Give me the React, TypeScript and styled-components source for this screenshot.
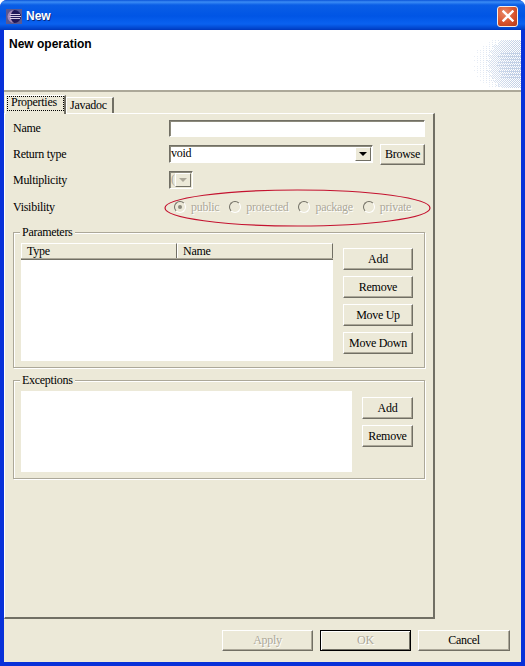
import styled, { createGlobalStyle } from "styled-components";

const GlobalStyle = createGlobalStyle`
  html, body {
    margin: 0;
    padding: 0;
    background: #fff;
  }
  * {
    box-sizing: border-box;
  }
`;

const App = () => {
  return (
    <Window>
      <GlobalStyle />
      <TitleBar>
        <AppIcon />
        <TitleText>New</TitleText>
        <CloseButton>
          <svg width="12" height="12" viewBox="0 0 12 12">
            <path d="M1.5 1.5 L10.5 10.5 M10.5 1.5 L1.5 10.5" stroke="#fff" strokeWidth="2.4" strokeLinecap="square" />
          </svg>
        </CloseButton>
      </TitleBar>
      <Body>
        <Banner>
          <BannerTitle>New operation</BannerTitle>
          <BannerArt />
        </Banner>
        <TabFolder>
          <TabRow>
            <Tab $active>
              <TabFocus>Properties</TabFocus>
            </Tab>
            <Tab>Javadoc</Tab>
          </TabRow>
          <Panel>
            <FormRow $height={17}>
              <Label>Name</Label>
              <TextField $width={256} />
            </FormRow>
            <FormRow $height={22} $top={6}>
              <Label>Return type</Label>
              <TextField $width={204}>
                <FieldText>void</FieldText>
                <ArrowButton />
              </TextField>
              <PushButton $width={45} $height={21} $left={7}>
                Browse
              </PushButton>
            </FormRow>
            <FormRow $height={18} $top={6}>
              <Label>Multiplicity</Label>
              <TextField $width={24} $disabled>
                <FieldText $disabled>(</FieldText>
                <ArrowButton $disabled />
              </TextField>
            </FormRow>
            <FormRow $height={20} $top={8}>
              <Label>Visibility</Label>
              <RadioGroup>
                <Radio $checked />
                <RadioLabel>public</RadioLabel>
                <Radio />
                <RadioLabel>protected</RadioLabel>
                <Radio />
                <RadioLabel>package</RadioLabel>
                <Radio />
                <RadioLabel>private</RadioLabel>
              </RadioGroup>
              <Annotation width="268" height="38" viewBox="0 0 268 38">
                <ellipse cx="133.5" cy="19" rx="132.5" ry="18" fill="none" stroke="#c4122f" strokeWidth="1.2" />
              </Annotation>
            </FormRow>

            <Group $top={15}>
              <GroupLegend>Parameters</GroupLegend>
              <ListArea $width={312} $height={118}>
                <TableHead>
                  <HeadCell $width={156}>Type</HeadCell>
                  <HeadCell $width={156}>Name</HeadCell>
                </TableHead>
              </ListArea>
              <ButtonColumn $width={70} $offset={5}>
                <PushButton>Add</PushButton>
                <PushButton>Remove</PushButton>
                <PushButton>Move Up</PushButton>
                <PushButton>Move Down</PushButton>
              </ButtonColumn>
            </Group>

            <Group $top={12}>
              <GroupLegend>Exceptions</GroupLegend>
              <ListArea $width={331} $height={81} />
              <ButtonColumn $width={51} $offset={6}>
                <PushButton>Add</PushButton>
                <PushButton>Remove</PushButton>
              </ButtonColumn>
            </Group>
          </Panel>
        </TabFolder>
        <Footer>
          <PushButton $width={91} $height={21} $disabled>
            Apply
          </PushButton>
          <PushButton $width={91} $height={21} $disabled $default>
            OK
          </PushButton>
          <PushButton $width={92} $height={21}>
            Cancel
          </PushButton>
        </Footer>
      </Body>
    </Window>
  );
};
export default App;

const AppIcon = () => (
  <svg width="16" height="15" viewBox="0 0 16 15" style={{ flex: "none" }}>
    <rect width="16" height="15" fill="#5a5890" />
    <circle cx="8.5" cy="7.5" r="6.5" fill="#1f1758" />
    <path d="M8 1 A6.5 6.5 0 0 0 8 14 A8 8 0 0 1 8 1 Z" fill="#a58ab8" />
    <path d="M4 5.5 H14 M3.5 7.5 H15 M4 9.5 H14" stroke="#d8cce4" strokeWidth="1" />
  </svg>
);

const BannerArt = () => {
  const dots = [];
  for (let y = 0; y < 48; y++) {
    const edge = Math.sqrt(1 - ((y - 23.5) / 24) ** 2);
    const start = 24 - edge * 24 + (y % 5) * 1.5;
    for (let x = 0; x < 50; x++) {
      if (x < start) continue;
      const depth = (x - start) / (50 - start);
      const stripe = y % 3 === 1 && depth > 0.5 && y > 12 && y < 40;
      const visible =
        depth < 0.3 ? x % 3 === 0 && y % 2 === 0 : stripe || (x + y) % 2 === 0;
      if (visible) {
        dots.push(
          <rect
            key={`${x}-${y}`}
            x={x}
            y={y}
            width="1"
            height="1"
            fill="#c2d0e6"
            opacity={Math.min(1, 0.35 + depth * 0.8)}
          />
        );
      }
    }
  }
  return (
    <BannerSvg width="50" height="48" viewBox="0 0 50 48">
      {dots}
    </BannerSvg>
  );
};

const Window = styled.div`
  width: 525px;
  height: 666px;
  display: flex;
  flex-direction: column;
  background: #0831d9;
  border-radius: 7px 7px 0 0;
  overflow: hidden;
  font-family: "Liberation Serif", serif;
  font-size: 12px;
  letter-spacing: -0.28px;
  color: #000;
`;

const TitleBar = styled.div`
  height: 30px;
  flex: none;
  display: flex;
  align-items: center;
  padding: 2px 7px 0 6px;
  background: linear-gradient(
    180deg,
    #0a54d8 0,
    #3b8cf5 2px,
    #0a5ee6 5px,
    #0055e5 16px,
    #0a62f0 24px,
    #0041c8 29px,
    #0035b8 30px
  );
`;

const TitleText = styled.span`
  margin-left: 4px;
  font-family: "Liberation Sans", sans-serif;
  font-size: 12px;
  font-weight: 700;
  letter-spacing: 0;
  color: #fff;
  text-shadow: 1px 1px 0 #0a2a80;
`;

const CloseButton = styled.div`
  margin-left: auto;
  width: 21px;
  height: 21px;
  display: flex;
  align-items: center;
  justify-content: center;
  border: 1px solid #f4ece8;
  border-radius: 3px;
  background: radial-gradient(circle at 35% 30%, #e98a68 0, #d9532c 55%, #b23a1a 100%);
`;

const Body = styled.div`
  flex: 1;
  margin: 0 4px 4px;
  display: flex;
  flex-direction: column;
  background: #ece9d8;
`;

const Banner = styled.div`
  height: 62px;
  flex: none;
  display: flex;
  justify-content: space-between;
  padding: 7px 0 0 5px;
  background: #fff;
  border-bottom: 2px solid #aca899;
`;

const BannerTitle = styled.div`
  font-family: "Liberation Sans", sans-serif;
  font-size: 12px;
  font-weight: 700;
  letter-spacing: 0;
  line-height: 14px;
`;

const BannerSvg = styled.svg`
  flex: none;
  margin-top: 3px;
`;

const TabFolder = styled.div`
  flex: 1;
  width: 431px;
  display: flex;
  flex-direction: column;
`;

const TabRow = styled.div`
  height: 21px;
  flex: none;
  display: flex;
  align-items: flex-end;
  padding-left: 1px;
`;

const Tab = styled.div<{ $active?: boolean }>`
  position: relative;
  z-index: 1;
  height: ${(p) => (p.$active ? 19 : 16)}px;
  margin-bottom: ${(p) => (p.$active ? -1 : 0)}px;
  padding: ${(p) => (p.$active ? "0 0 0 1px" : "0 5px 0 3px")};
  line-height: 14px;
  background: #ece9d8;
  border-top: 1px solid #fff;
  border-left: 1px solid #fff;
  border-right: 2px solid #716f64;
`;

const TabFocus = styled.div`
  width: 57px;
  height: 15px;
  padding: 0 3px;
  line-height: 11px;
  border: 1px dotted #000;
`;

const Panel = styled.div`
  flex: 1;
  padding: 6px 8px 0;
  border-top: 1px solid #fff;
  border-left: 1px solid #fff;
  border-right: 2px solid #716f64;
  border-bottom: 2px solid #716f64;
`;

const FormRow = styled.div<{ $height: number; $top?: number }>`
  position: relative;
  height: ${(p) => p.$height}px;
  margin-top: ${(p) => p.$top || 0}px;
  display: flex;
  align-items: center;
`;

const Label = styled.div`
  width: 156px;
  flex: none;
`;

const TextField = styled.div<{ $width: number; $disabled?: boolean }>`
  width: ${(p) => p.$width}px;
  height: ${(p) => (p.$width === 256 ? 17 : 18)}px;
  display: flex;
  align-items: center;
  justify-content: space-between;
  padding-left: 1px;
  line-height: 14px;
  background: ${(p) => (p.$disabled ? "#ece9d8" : "#fff")};
  border: 1px solid;
  border-color: #716f64 #fff #fff #716f64;
  box-shadow: inset 1px 1px 0 #8c8a7c;
`;

const FieldText = styled.span<{ $disabled?: boolean }>`
  margin-top: -2px;
  color: ${(p) => (p.$disabled ? "#aca899" : "#000")};
`;

const ArrowButton = styled.div<{ $disabled?: boolean }>`
  width: 16px;
  height: 14px;
  margin-right: 1px;
  flex: none;
  display: flex;
  align-items: center;
  justify-content: center;
  background: #ece9d8;
  border: 1px solid;
  border-color: #fff #716f64 #716f64 #fff;

  &::after {
    content: "";
    border-left: 4px solid transparent;
    border-right: 4px solid transparent;
    border-top: 4px solid ${(p) => (p.$disabled ? "#aca899" : "#000")};
  }
`;

const PushButton = styled.div<{
  $width?: number;
  $height?: number;
  $left?: number;
  $disabled?: boolean;
  $default?: boolean;
}>`
  width: ${(p) => (p.$width ? `${p.$width}px` : "100%")};
  height: ${(p) => p.$height || 22}px;
  margin-left: ${(p) => p.$left || 0}px;
  flex: none;
  display: flex;
  align-items: center;
  justify-content: center;
  background: #ece9d8;
  color: ${(p) => (p.$disabled ? "#aca899" : "#000")};
  text-shadow: ${(p) => (p.$disabled ? "1px 1px 0 #fff" : "none")};
  border: 1px solid;
  border-color: ${(p) => (p.$default ? "#000" : "#fff #716f64 #716f64 #fff")};
  box-shadow: ${(p) =>
    p.$default
      ? "inset 1px 1px 0 #fff, inset -1px -1px 0 #716f64"
      : "inset -1px -1px 0 #aca899"};
`;

const RadioGroup = styled.div`
  display: flex;
  align-items: center;
  padding-left: 5px;
  gap: 5px;
  color: #aca899;
`;

const Radio = styled.div<{ $checked?: boolean }>`
  position: relative;
  width: 12px;
  height: 12px;
  flex: none;
  border-radius: 50%;
  background: #ece9d8;
  border: 1px solid;
  border-color: #716f64 #fff #fff #716f64;

  &::after {
    content: "";
    display: ${(p) => (p.$checked ? "block" : "none")};
    position: absolute;
    left: 3px;
    top: 3px;
    width: 4px;
    height: 4px;
    border-radius: 50%;
    background: #8c8a7c;
  }
`;

const RadioLabel = styled.span`
  margin-right: 5px;
  text-shadow: 1px 1px 0 #fff;
`;

const Annotation = styled.svg`
  position: absolute;
  left: 151px;
  top: -8px;
`;

const Group = styled.div<{ $top: number }>`
  position: relative;
  width: 412px;
  margin-top: ${(p) => p.$top}px;
  display: flex;
  align-items: flex-start;
  justify-content: space-between;
  padding: 10px 11px 6px 7px;
  border: 1px solid #aca899;
  box-shadow: 1px 1px 0 #fff, inset 1px 1px 0 #fff;
`;

const GroupLegend = styled.div`
  position: absolute;
  left: 6px;
  top: -7px;
  padding: 0 2px;
  line-height: 12px;
  background: #ece9d8;
`;

const ListArea = styled.div<{ $width: number; $height: number }>`
  width: ${(p) => p.$width}px;
  height: ${(p) => p.$height}px;
  flex: none;
  background: #fff;
`;

const TableHead = styled.div`
  height: 16px;
  display: flex;
  background: #ece9d8;
  border-bottom: 1px solid #aca899;
  box-shadow: 0 1px 0 #716f64;
`;

const HeadCell = styled.div<{ $width: number }>`
  width: ${(p) => p.$width}px;
  padding-left: 5px;
  line-height: 14px;
  border-top: 1px solid #fff;
  border-right: 1px solid #716f64;
  border-left: 1px solid #fff;
`;

const ButtonColumn = styled.div<{ $width: number; $offset: number }>`
  width: ${(p) => p.$width}px;
  flex: none;
  display: flex;
  flex-direction: column;
  gap: 6px;
  padding-top: ${(p) => p.$offset}px;
`;

const Footer = styled.div`
  height: 43px;
  flex: none;
  display: flex;
  justify-content: flex-end;
  gap: 7px;
  padding: 11px 11px 0 0;
`;
